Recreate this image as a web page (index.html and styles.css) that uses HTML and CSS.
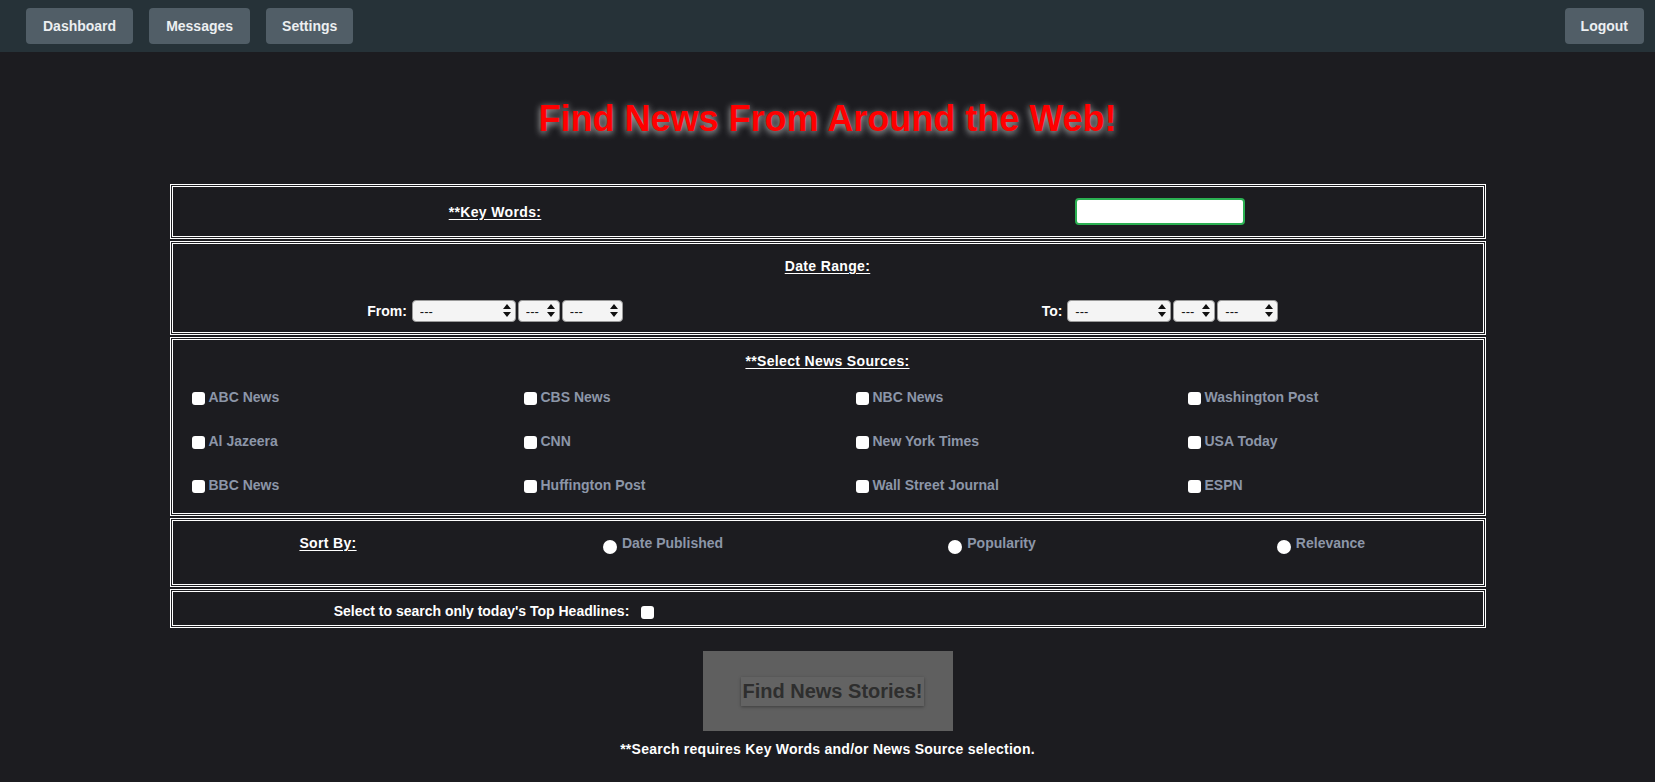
FILE: index.html
```html
<!DOCTYPE html>
<html lang="en">
<head>
<meta charset="utf-8">
<title>Find News</title>
<link rel="stylesheet" href="styles.css">
</head>
<body>
<nav class="topbar">
  <a class="navbtn" href="#">Dashboard</a>
  <a class="navbtn" href="#">Messages</a>
  <a class="navbtn" href="#">Settings</a>
  <a class="navbtn logout" href="#">Logout</a>
</nav>
<main class="page">
  <h1 class="title">Find News From Around the Web!</h1>
  <form class="search">
    <div class="box row-keywords">
      <div class="cell"><span class="label">**Key Words:</span></div>
      <div class="cell"><input class="kw" type="text"></div>
    </div>

    <div class="box row-dates">
      <div class="heading"><span class="label">Date Range:</span></div>
      <div class="date-grid">
        <div class="cell date-group">
          <span class="plain">From:</span>
          <span class="sel w-month"><select><option>---</option></select><svg class="arrows" viewBox="0 0 8 13" width="8" height="13"><path d="M4 0 L8 5 L0 5 Z M0 8 L8 8 L4 13 Z" fill="#111"/></svg></span>
          <span class="sel w-day"><select><option>---</option></select><svg class="arrows" viewBox="0 0 8 13" width="8" height="13"><path d="M4 0 L8 5 L0 5 Z M0 8 L8 8 L4 13 Z" fill="#111"/></svg></span>
          <span class="sel w-year"><select><option>---</option></select><svg class="arrows" viewBox="0 0 8 13" width="8" height="13"><path d="M4 0 L8 5 L0 5 Z M0 8 L8 8 L4 13 Z" fill="#111"/></svg></span>
        </div>
        <div class="cell date-group">
          <span class="plain">To:</span>
          <span class="sel w-month"><select><option>---</option></select><svg class="arrows" viewBox="0 0 8 13" width="8" height="13"><path d="M4 0 L8 5 L0 5 Z M0 8 L8 8 L4 13 Z" fill="#111"/></svg></span>
          <span class="sel w-day"><select><option>---</option></select><svg class="arrows" viewBox="0 0 8 13" width="8" height="13"><path d="M4 0 L8 5 L0 5 Z M0 8 L8 8 L4 13 Z" fill="#111"/></svg></span>
          <span class="sel w-year"><select><option>---</option></select><svg class="arrows" viewBox="0 0 8 13" width="8" height="13"><path d="M4 0 L8 5 L0 5 Z M0 8 L8 8 L4 13 Z" fill="#111"/></svg></span>
        </div>
      </div>
    </div>

    <div class="box row-sources">
      <div class="heading"><span class="label">**Select News Sources:</span></div>
      <div class="source-grid">
        <label class="opt"><input type="checkbox" class="cb">ABC News</label>
        <label class="opt"><input type="checkbox" class="cb">CBS News</label>
        <label class="opt"><input type="checkbox" class="cb">NBC News</label>
        <label class="opt"><input type="checkbox" class="cb">Washington Post</label>
        <label class="opt"><input type="checkbox" class="cb">Al Jazeera</label>
        <label class="opt"><input type="checkbox" class="cb">CNN</label>
        <label class="opt"><input type="checkbox" class="cb">New York Times</label>
        <label class="opt"><input type="checkbox" class="cb">USA Today</label>
        <label class="opt"><input type="checkbox" class="cb">BBC News</label>
        <label class="opt"><input type="checkbox" class="cb">Huffington Post</label>
        <label class="opt"><input type="checkbox" class="cb">Wall Street Journal</label>
        <label class="opt"><input type="checkbox" class="cb">ESPN</label>
      </div>
    </div>

    <div class="box row-sort">
      <div class="cell"><span class="label">Sort By:</span></div>
      <div class="cell"><label class="opt"><input type="radio" name="sort" class="rb">Date Published</label></div>
      <div class="cell"><label class="opt"><input type="radio" name="sort" class="rb">Popularity</label></div>
      <div class="cell"><label class="opt"><input type="radio" name="sort" class="rb">Relevance</label></div>
    </div>

    <div class="box row-top">
      <div class="cell"><span class="plain">Select to search only today's Top Headlines:</span><input type="checkbox" class="cb top-cb"></div>
      <div class="cell"></div>
    </div>

    <div class="submit-wrap">
      <button type="button" class="find">Find News Stories!</button>
    </div>
    <p class="note">**Search requires Key Words and/or News Source selection.</p>
  </form>
</main>
</body>
</html>
```
FILE: styles.css
```css
* { box-sizing: border-box; }

body {
  margin: 0;
  background: #1c1c20;
  font-family: "Liberation Sans", Arial, sans-serif;
  font-size: 14px;
  color: #fff;
}

.topbar {
  display: flex;
  align-items: center;
  gap: 16px;
  height: 52px;
  padding: 0 11px 0 26px;
  background: #263238;
}

.navbtn {
  display: flex;
  align-items: center;
  height: 36px;
  padding: 0 17px;
  border-radius: 4px;
  background: #515e67;
  color: #eceff1;
  font-weight: bold;
  font-size: 14px;
  text-decoration: none;
}

.navbtn:nth-child(3) { padding: 0 16px; }

.logout { margin-left: auto; padding: 0 16px; }

.page { padding-top: 46px; }

.title {
  margin: 0 0 44px;
  text-align: center;
  font-size: 36px;
  line-height: 42px;
  font-weight: bold;
  color: #ff0000;
  text-shadow: 0 2px 7px rgba(235, 235, 235, 0.8);
}

.search {
  display: flex;
  flex-direction: column;
  align-items: center;
  gap: 2px;
}

.box {
  width: 1316px;
  border: 3px double #fff;
}

.label {
  font-weight: bold;
  text-decoration: underline;
  text-underline-offset: 2px;
  line-height: 18px;
  letter-spacing: 0.35px;
}

.plain { font-weight: bold; line-height: 18px; }

.cell {
  display: flex;
  align-items: center;
  justify-content: center;
}

.heading {
  text-align: center;
  line-height: 18px;
}

/* Row 1 */
.row-keywords {
  display: grid;
  grid-template-columns: 1fr 1fr;
  column-gap: 20px;
  height: 55px;
  align-items: center;
}

.kw {
  width: 170px;
  height: 27px;
  border: 2px solid #2bb052;
  border-radius: 4px;
  background: #fff;
  outline: none;
}

/* Row 2 */
.row-dates {
  height: 94px;
  padding-top: 13px;
}

.date-grid {
  display: grid;
  grid-template-columns: 1fr 1fr;
  column-gap: 20px;
  margin-top: 25px;
}

.date-group { gap: 2px; }
.date-group .plain { margin-right: 3px; }

.sel {
  position: relative;
  display: inline-block;
  height: 22px;
}

.sel select {
  appearance: none;
  -webkit-appearance: none;
  width: 100%;
  height: 22px;
  padding: 0 0 0 7px;
  border: 1px solid #9a9a9a;
  border-radius: 4px;
  background: #f4f4f4;
  color: #111;
  font-family: "Liberation Sans", Arial, sans-serif;
  font-size: 13px;
}

.sel .arrows {
  position: absolute;
  right: 5px;
  top: 4px;
  pointer-events: none;
}

.w-month { width: 104px; }
.w-day { width: 42px; }
.w-year { width: 61px; }

/* Row 3 */
.row-sources {
  height: 179px;
  padding-top: 12px;
}

.source-grid {
  display: grid;
  grid-template-columns: 332px 332px 332px 1fr;
  grid-auto-rows: 44px;
  align-items: center;
  padding-left: 19px;
  margin-top: 5px;
}

.opt {
  color: #8c96a8;
  font-weight: bold;
  line-height: 18px;
  white-space: nowrap;
}

.cb {
  appearance: none;
  -webkit-appearance: none;
  width: 13px;
  height: 13px;
  margin: 0 4px 0 0;
  border-radius: 3px;
  background: #fff;
  vertical-align: -3px;
}

/* Row 4 */
.row-sort {
  display: grid;
  grid-template-columns: repeat(4, 1fr);
  column-gap: 6px;
  align-items: start;
  height: 69px;
  padding-top: 13px;
}

.row-sort .cell:first-child { padding-right: 12px; }

.rb {
  appearance: none;
  -webkit-appearance: none;
  width: 14px;
  height: 14px;
  margin: 0 5px 0 0;
  border-radius: 50%;
  background: #fff;
  vertical-align: -6px;
}

/* Row 5 */
.row-top {
  display: grid;
  grid-template-columns: 1fr 1fr;
  column-gap: 20px;
  height: 39px;
  padding-top: 10px;
  align-items: start;
}

.row-top .cell { padding-right: 2px; }

.top-cb { margin: 0 0 0 12px; vertical-align: 0; position: relative; top: 1px; }

/* Submit */
.submit-wrap {
  display: flex;
  align-items: center;
  justify-content: center;
  width: 250px;
  height: 80px;
  margin-top: 21px;
  padding-left: 10px;
  background: #5f5f5f;
}

.find {
  height: 29px;
  padding: 0 1px;
  border: none;
  background: #636363;
  box-shadow: 0 1px 3px rgba(0, 0, 0, 0.35);
  color: #2e2e2e;
  font-family: "Liberation Sans", Arial, sans-serif;
  font-weight: bold;
  font-size: 20px;
}

.note {
  margin: 7px 0 0;
  font-weight: bold;
  line-height: 18px;
  letter-spacing: 0.25px;
  text-align: center;
}
```
